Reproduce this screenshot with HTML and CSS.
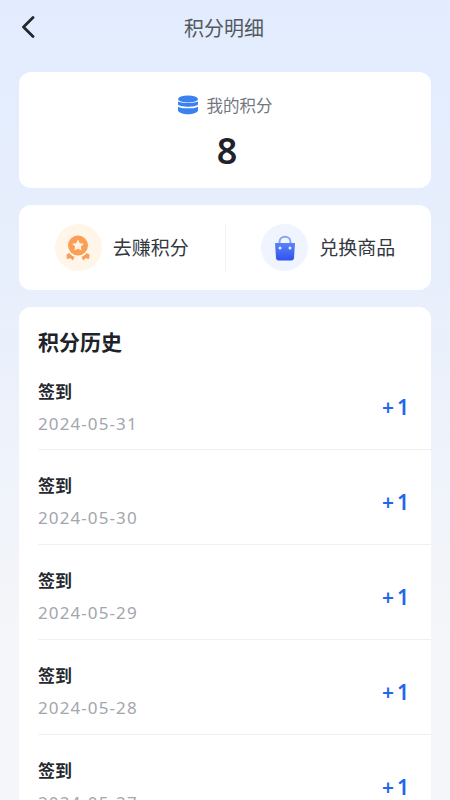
FILE: index.html
```html
<!DOCTYPE html>
<html>
<head>
    <meta charset="UTF-8">
    <title>积分明细</title>
    <link rel="stylesheet" href="styles.css">
</head>
<body>
    <div class="page">
        <div class="nav-bar">
            <svg class="back-icon" width="14" height="22" viewBox="0 0 14 22">
                <path d="M12 1.5 L2.5 11 L12 20.5" fill="none" stroke="#22262e" stroke-width="2.8" stroke-linecap="round" stroke-linejoin="round"/>
            </svg>
            <span class="nav-title">积分明细</span>
        </div>

        <div class="card points-card">
            <div class="points-label">
                <svg width="20" height="20" viewBox="0 0 20 20">
                    <ellipse cx="10" cy="4" rx="10" ry="3.6" fill="#3b82f0"/>
                    <path d="M0 6.2 C2 8.6 18 8.6 20 6.2 V9.4 C18 12.4 2 12.4 0 9.4 Z" fill="#3b82f0"/>
                    <path d="M0 11.4 C2 14 18 14 20 11.4 V15.6 C18 20.6 2 20.6 0 15.6 Z" fill="#3b82f0"/>
                </svg>
                <span>我的积分</span>
            </div>
            <div class="points-value">8</div>
        </div>

        <div class="card actions-card">
            <div class="action">
                <div class="action-icon orange-bg">
                    <svg width="28" height="28" viewBox="0 0 28 28">
                        <path d="M2.5 20.5 L5.5 19 Q7.5 22 10.5 23 L8.8 26.5 L6.5 24.2 L2.8 25 Z" fill="#f99f5e"/>
                        <path d="M25.5 20.5 L22.5 19 Q20.5 22 17.5 23 L19.2 26.5 L21.5 24.2 L25.2 25 Z" fill="#f99f5e"/>
                        <circle cx="14" cy="11.5" r="10" fill="#fb9f55"/>
                        <path d="M14 5.6 L15.8 9.2 L19.8 9.8 L16.9 12.6 L17.6 16.5 L14 14.7 L10.4 16.5 L11.1 12.6 L8.2 9.8 L12.2 9.2 Z" fill="#fff3e4"/>
                    </svg>
                </div>
                <span class="action-text">去赚积分</span>
            </div>
            <div class="action-divider"></div>
            <div class="action">
                <div class="action-icon blue-bg">
                    <svg width="22" height="26" viewBox="0 0 22 26">
                        <defs>
                            <linearGradient id="bag" x1="0" y1="0" x2="0" y2="1">
                                <stop offset="0" stop-color="#5a83f5"/>
                                <stop offset="1" stop-color="#2f52ee"/>
                            </linearGradient>
                        </defs>
                        <path d="M5.5 9 V7 C5.5 0 16.5 0 16.5 7 V9" fill="none" stroke="#86a3f7" stroke-width="2"/>
                        <path d="M1 8 H21 L20 23 C19.9 24.6 19 25.5 17.5 25.5 H4.5 C3 25.5 2.1 24.6 2 23 Z" fill="url(#bag)"/>
                        <circle cx="6" cy="13" r="1.5" fill="#e6ecff"/>
                        <circle cx="16" cy="13" r="1.5" fill="#e6ecff"/>
                    </svg>
                </div>
                <span class="action-text">兑换商品</span>
            </div>
        </div>

        <div class="card history-card">
            <h2 class="history-title">积分历史</h2>
            <div class="history-row">
                <div>
                    <div class="row-name">签到</div>
                    <div class="row-date">2024-05-31</div>
                </div>
                <div class="row-points"><span class="plus">+</span>1</div>
            </div>
            <div class="history-row">
                <div>
                    <div class="row-name">签到</div>
                    <div class="row-date">2024-05-30</div>
                </div>
                <div class="row-points"><span class="plus">+</span>1</div>
            </div>
            <div class="history-row">
                <div>
                    <div class="row-name">签到</div>
                    <div class="row-date">2024-05-29</div>
                </div>
                <div class="row-points"><span class="plus">+</span>1</div>
            </div>
            <div class="history-row">
                <div>
                    <div class="row-name">签到</div>
                    <div class="row-date">2024-05-28</div>
                </div>
                <div class="row-points"><span class="plus">+</span>1</div>
            </div>
            <div class="history-row">
                <div>
                    <div class="row-name">签到</div>
                    <div class="row-date">2024-05-27</div>
                </div>
                <div class="row-points"><span class="plus">+</span>1</div>
            </div>
        </div>
    </div>
</body>
</html>
```

FILE: styles.css
```css
/* Page */
html,
body {
    margin: 0;
    height: 100%;
    overflow: hidden;
}

body {
    font-family: "Noto Sans CJK SC", "Noto Sans", sans-serif;
}

.page {
    height: 800px;
    overflow: hidden;
    box-sizing: border-box;
    padding: 0 19px;
    background: linear-gradient(180deg, #e2ecfe 0%, #e8effc 35%, #f5f6f9 80%, #f5f6f9 100%);
}

/* Nav bar */
.nav-bar {
    height: 72px;
    padding-right: 2px;
    display: flex;
    align-items: flex-start;
    justify-content: center;
    position: relative;
}

.back-icon {
    position: absolute;
    left: 2px;
    top: 16px;
}

.nav-title {
    margin-top: 14px;
    font-size: 20px;
    line-height: 28px;
    color: #54585f;
}

/* Cards */
.card {
    background-color: #fff;
    border-radius: 12px;
}

.points-card {
    height: 116px;
    box-sizing: border-box;
    padding-top: 22px;
    text-align: center;
}

.points-label {
    display: flex;
    align-items: center;
    justify-content: center;
    gap: 9px;
    font-size: 16.5px;
    line-height: 22px;
    color: #73777f;
}

.points-value {
    margin-top: 12px;
    padding-left: 4px;
    font-family: "Noto Sans", sans-serif;
    font-size: 36px;
    line-height: 46px;
    font-weight: 600;
    color: #1f2329;
}

.actions-card {
    margin-top: 17px;
    height: 85px;
    display: flex;
    align-items: center;
}

.action {
    flex: 1;
    display: flex;
    align-items: center;
    justify-content: center;
    gap: 11px;
}

.action-icon {
    width: 47px;
    height: 47px;
    border-radius: 50%;
    display: flex;
    align-items: center;
    justify-content: center;
}

.orange-bg {
    background-color: #fff5e8;
}

.blue-bg {
    background-color: #f0f4fe;
}

.action-text {
    margin-bottom: 2px;
    font-size: 19px;
    line-height: 26px;
    color: #33373e;
}

.action-divider {
    width: 1px;
    height: 48px;
    background-color: #f1f2f4;
}

/* History list */
.history-card {
    margin-top: 17px;
    padding: 19px 0 0 19px;
    border-radius: 12px 12px 0 0;
}

.history-title {
    margin: 0;
    font-size: 21px;
    line-height: 30px;
    font-weight: 700;
    color: #1f2329;
}

.history-row {
    height: 95px;
    box-sizing: border-box;
    padding: 9px 22px 0 0;
    display: flex;
    align-items: center;
    justify-content: space-between;
    border-bottom: 1px solid #eff0f2;
}

.history-title + .history-row {
    height: 94px;
    padding-top: 9px;
}

.row-name {
    font-size: 17px;
    line-height: 22px;
    font-weight: 700;
    color: #25282e;
}

.row-date {
    margin-top: 11px;
    font-family: "Noto Sans", sans-serif;
    font-size: 17px;
    line-height: 22px;
    letter-spacing: 1.1px;
    color: #a3a6ad;
}

.row-points {
    font-family: "Noto Sans", sans-serif;
    font-size: 21px;
    line-height: 28px;
    font-weight: 600;
    color: #2366ee;
}

.plus {
    margin-right: 3px;
}
```
